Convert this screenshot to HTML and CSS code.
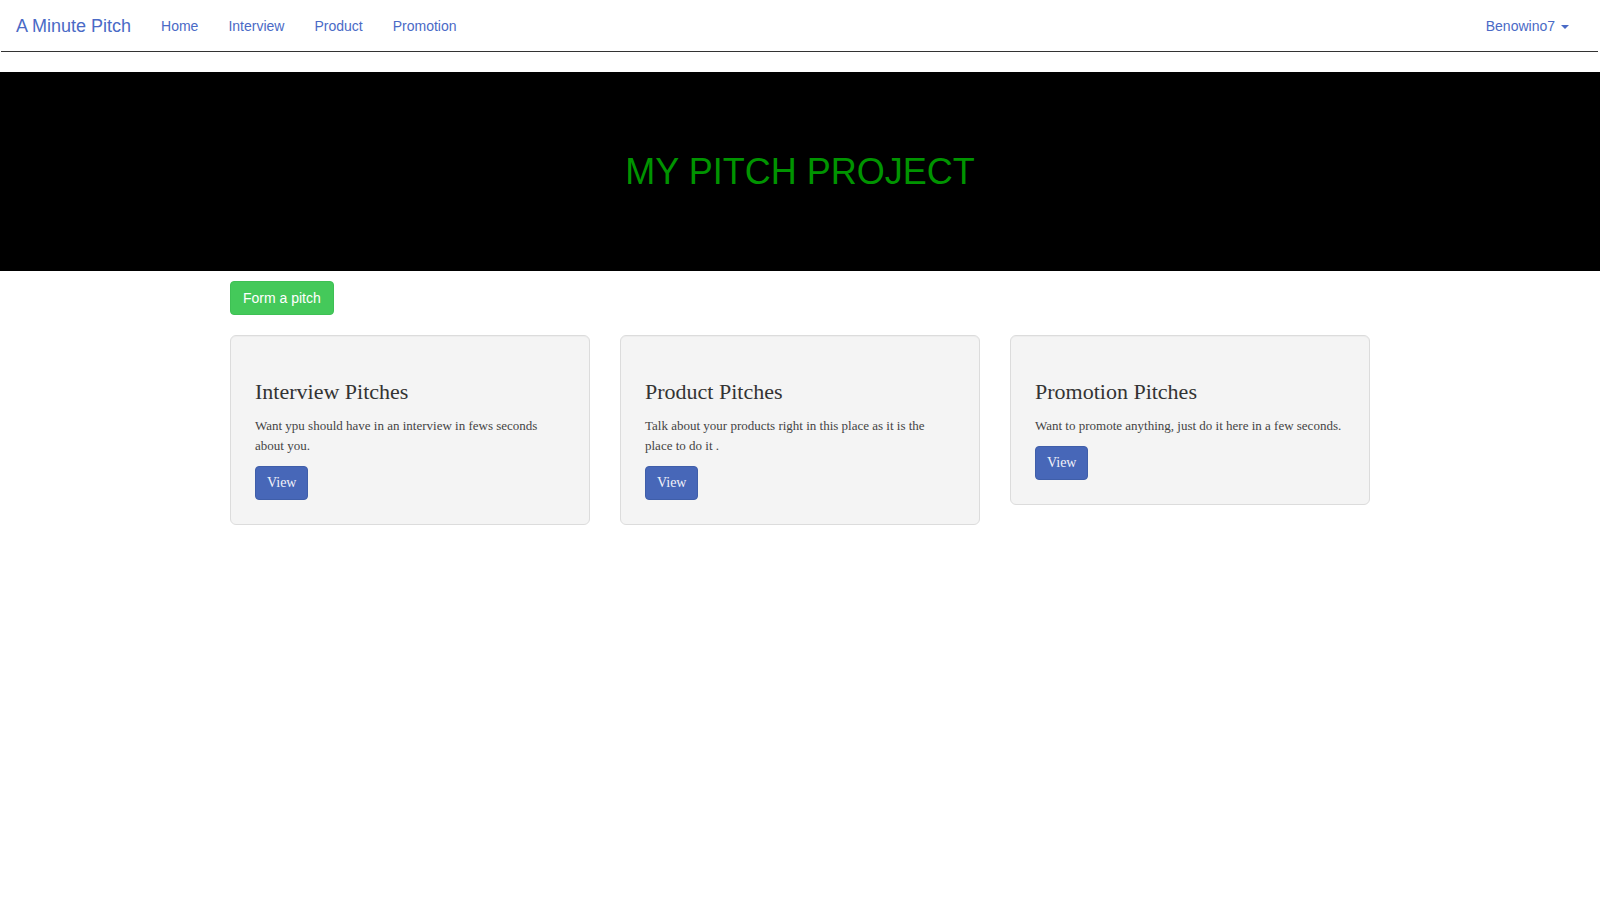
FILE: index.html
```html
<!DOCTYPE html>
<html lang="en">
<head>
<meta charset="utf-8">
<title>A Minute Pitch</title>
<link rel="stylesheet" href="styles.css">
</head>
<body>
<nav class="navbar">
  <div class="nav-left">
    <a class="brand" href="#">A Minute Pitch</a>
    <a class="nav-link" href="#">Home</a>
    <a class="nav-link" href="#">Interview</a>
    <a class="nav-link" href="#">Product</a>
    <a class="nav-link" href="#">Promotion</a>
  </div>
  <div class="nav-right">
    <a class="nav-link user" href="#">Benowino7<span class="caret"></span></a>
  </div>
</nav>

<header class="jumbo">
  <h1 class="jumbo-title">MY PITCH PROJECT</h1>
</header>

<main class="container">
  <a class="btn-success" href="#">Form a pitch</a>
  <div class="cards">
    <div class="card">
      <h3 class="card-title">Interview Pitches</h3>
      <p class="card-text">Want ypu should have in an interview in fews seconds about you.</p>
      <a class="btn-view" href="#">View</a>
    </div>
    <div class="card">
      <h3 class="card-title">Product Pitches</h3>
      <p class="card-text">Talk about your products right in this place as it is the place to do it .</p>
      <a class="btn-view" href="#">View</a>
    </div>
    <div class="card">
      <h3 class="card-title">Promotion Pitches</h3>
      <p class="card-text">Want to promote anything, just do it here in a few seconds.</p>
      <a class="btn-view" href="#">View</a>
    </div>
  </div>
</main>
</body>
</html>
```

FILE: styles.css
```css
* { box-sizing: border-box; }

body {
  margin: 0;
  font-family: "Liberation Sans", Arial, sans-serif;
  font-size: 14px;
  line-height: 20px;
  color: #333;
  background: #fff;
}

a { text-decoration: none; }

.navbar {
  display: flex;
  justify-content: space-between;
  align-items: stretch;
  height: 52px;
  padding-top: 1px;
  margin: 0 2px 20px 1px;
  border-bottom: 1px solid #333;
  background: #fff;
}

.nav-left, .nav-right {
  display: flex;
  align-items: stretch;
}

.brand {
  padding: 15px 15px 15px 15px;
  font-size: 18px;
  line-height: 20px;
  color: #4a6ac6;
}

.nav-link {
  padding: 15px;
  font-size: 14px;
  line-height: 20px;
  color: #4a6ac6;
  display: flex;
  align-items: flex-start;
}

.nav-link.user {
  padding-right: 29px;
}

.caret {
  display: inline-block;
  width: 0;
  height: 0;
  margin-left: 6px;
  margin-top: 9px;
  border-top: 4px solid #4a6ac6;
  border-left: 4px solid transparent;
  border-right: 4px solid transparent;
}

.jumbo {
  height: 199px;
  background: #000;
  display: flex;
  align-items: center;
  justify-content: center;
}

.jumbo-title {
  margin: 0;
  font-family: "Liberation Sans", Arial, sans-serif;
  font-weight: normal;
  font-size: 36px;
  line-height: 1.1;
  color: #009400;
}

.container {
  width: 1140px;
  margin: 0 auto;
  padding-top: 10px;
}

.btn-success {
  display: inline-block;
  padding: 6px 12px;
  font-size: 14px;
  line-height: 20px;
  color: #fff;
  background: #44c95a;
  border: 1px solid #3ec054;
  border-radius: 4px;
}

.cards {
  display: grid;
  grid-template-columns: repeat(3, 360px);
  column-gap: 30px;
  align-items: start;
  margin-top: 20px;
}

.card {
  background: #f4f4f4;
  border: 1px solid #dcdcdc;
  border-radius: 6px;
  padding: 24px 24px 24px 24px;
  box-shadow: inset 0 1px 1px rgba(0, 0, 0, 0.03);
  font-family: "Liberation Serif", "Times New Roman", serif;
}

.card-title {
  margin: 19px 0 11px 0;
  font-size: 22px;
  line-height: 26px;
  font-weight: normal;
  color: #333;
}

.card-text {
  margin: 0 0 10px 0;
  font-size: 13px;
  line-height: 20px;
  color: #444;
}

.btn-view {
  display: inline-block;
  padding: 6px 11px;
  font-family: "Liberation Serif", "Times New Roman", serif;
  font-size: 14px;
  line-height: 20px;
  color: #f2f2f8;
  background: #4767b8;
  border: 1px solid #3f5ea9;
  border-radius: 4px;
}
```
